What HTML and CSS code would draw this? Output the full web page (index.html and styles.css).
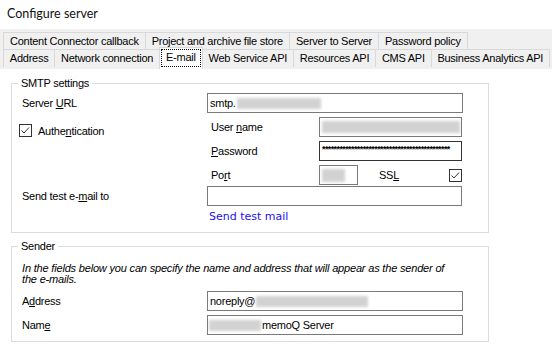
FILE: index.html
```html
<!DOCTYPE html>
<html>
<head>
<meta charset="utf-8">
<link rel="stylesheet" href="styles.css">
</head>
<body>
<div class="title">Configure server</div>
<div class="tabs">
  <div class="tabrow r1">
    <div class="tab">Content Connector callback</div>
    <div class="tab">Project and archive file store</div>
    <div class="tab">Server to Server</div>
    <div class="tab">Password policy</div>
  </div>
  <div class="tabrow r2">
    <div class="tab">Address</div>
    <div class="tab">Network connection</div>
    <div class="tab sel"><span class="focus">E-mail</span></div>
    <div class="tab">Web Service API</div>
    <div class="tab">Resources API</div>
    <div class="tab">CMS API</div>
    <div class="tab">Business Analytics API</div>
  </div>
</div>
<div class="content">
  <fieldset class="group smtp">
    <legend>SMTP settings</legend>
    <div class="row">
      <div class="lbl-a">Server <u>U</u>RL</div>
      <div class="field w256">smtp.<span class="blur b-url"></span></div>
    </div>
    <div class="row gap4">
      <div class="auth">
        <svg class="cb" width="13" height="13" viewBox="0 0 13 13"><rect x="0.5" y="0.5" width="12" height="12" fill="#fff" stroke="#333"/><path d="M2.5 6.5 L5 9 L10 3.5" fill="none" stroke="#333" stroke-width="1"/></svg>
        <span class="auth-txt">Authe<u>n</u>tication</span>
      </div>
      <div class="lbl-b">User <u>n</u>ame</div>
      <div class="field w143"><span class="blur b-user"></span></div>
    </div>
    <div class="row gap4">
      <div class="spacer"></div>
      <div class="lbl-b"><u>P</u>assword</div>
      <div class="field w143 focused"><span class="pwd">********************************************</span></div>
    </div>
    <div class="row gap4">
      <div class="spacer"></div>
      <div class="lbl-b">Po<u>r</u>t</div>
      <div class="field w39"><span class="blur b-port"></span></div>
      <div class="ssl">SS<u>L</u></div>
      <svg class="cb" width="13" height="13" viewBox="0 0 13 13"><rect x="0.5" y="0.5" width="12" height="12" fill="#fff" stroke="#333"/><path d="M2.5 6.5 L5 9 L10 3.5" fill="none" stroke="#333" stroke-width="1"/></svg>
    </div>
    <div class="row gap1">
      <div class="lbl-a">Send test e-<u>m</u>ail to</div>
      <div class="field w255"></div>
    </div>
    <div class="linkrow"><span class="link">Send test mail</span></div>
  </fieldset>
  <fieldset class="group sender">
    <legend>Sender</legend>
    <p class="note">In the fields below you can specify the name and address that will appear as the sender of<br>the e-mails.</p>
    <div class="row gap6">
      <div class="lbl-a">A<u>d</u>dress</div>
      <div class="field w256">noreply@<span class="blur b-addr"></span></div>
    </div>
    <div class="row gap4">
      <div class="lbl-a">Nam<u>e</u></div>
      <div class="field w256 namefield"><span class="blur b-name"></span><span class="nm">memoQ Server</span></div>
    </div>
  </fieldset>
</div>
</body>
</html>
```
FILE: styles.css
```css
* { box-sizing: border-box; }
html, body { margin: 0; padding: 0; }
body {
  width: 552px;
  height: 355px;
  overflow: hidden;
  background: #fff;
  color: #000;
  font-family: "Liberation Sans", Arial, sans-serif;
  font-size: 11px;
  letter-spacing: -0.25px;
}
u { text-decoration: underline; text-underline-offset: 1px; }

.title {
  height: 29px;
  padding: 6px 0 0 7px;
  font-family: Lato, "Liberation Sans", sans-serif;
  font-size: 12.5px;
  line-height: 16px;
  letter-spacing: 0;
  color: #111;
}

.tabs {
  height: 40px;
  background: #f0f0f0;
  padding: 3px 2px 0 3px;
}
.tabrow { display: flex; }
.r1 { height: 17px; }
.r2 { height: 18px; }
.tab {
  border: 1px solid #d9d9d9;
  border-bottom: none;
  padding: 0 6px;
  white-space: nowrap;
  text-align: center;
}
.tab + .tab { margin-left: -1px; }
.r1 .tab { line-height: 16px; }
.r2 .tab { line-height: 17px; flex-grow: 1; padding: 0 3px; }
.r2 .tab.sel {
  flex-grow: 0;
  background: #fff;
  margin-top: -2px;
  height: 22px;
  padding: 1px 1px 0;
  position: relative;
  z-index: 1;
}
.focus {
  display: block;
  border: 1px dotted #000;
  line-height: 15px;
  height: 18px;
  padding: 0 4px;
}

.content { padding: 8px 0 0 11px; }
.group {
  width: 478px;
  margin: 0;
  padding: 0 10px;
  border: 1px solid #dcdcdc;
  min-width: 0;
}
.group legend {
  padding: 0 3px;
  margin-left: -4px;
  line-height: 13px;
}
.smtp { padding-top: 3px; padding-bottom: 9px; }
.sender { margin-top: 7px; padding-bottom: 6px; }

.row { display: flex; align-items: center; height: 20px; }
.gap1 { margin-top: 1px; }
.gap4 { margin-top: 4px; }
.gap6 { margin-top: 6px; }
.lbl-a { width: 185px; }
.lbl-b { width: 108px; }
.spacer { width: 189px; }

.auth {
  width: 192px;
  margin-left: -3px;
  margin-top: 7px;
  align-self: flex-start;
  display: flex;
  align-items: center;
  height: 13px;
}
.auth-txt { margin-left: 6px; }
.cb { display: block; flex: none; }

.field {
  height: 20px;
  border: 1px solid #7a7a7a;
  background: #fff;
  padding: 0 2px;
  line-height: 18px;
  white-space: nowrap;
  overflow: hidden;
  display: flex;
  align-items: center;
}
.field.focused { border-color: #333; }
.w256 { width: 256px; }
.w255 { width: 255px; }
.w143 { width: 143px; }
.w39 { width: 39px; }

.blur {
  display: inline-block;
  height: 11px;
  background: #d2d2d2;
  filter: blur(1.5px);
  flex: none;
}
.b-url { width: 84px; margin-left: 1px; }
.b-user { width: 138px; height: 12px; }
.b-port { width: 23px; height: 13px; }
.b-addr { width: 112px; margin-left: 1px; }
.b-name { width: 52px; margin-left: -1px; }
.nm { margin-left: 1px; }

.pwd {
  font-size: 9px;
  line-height: 9px;
  letter-spacing: -0.6px;
  color: #000;
  font-weight: bold;
  margin-top: -3px;
}

.ssl { margin-left: 21px; width: 70px; }

.linkrow {
  margin-top: 4px;
  height: 13px;
  line-height: 13px;
  padding-left: 187px;
}
.link {
  font-family: "DejaVu Sans", Verdana, sans-serif;
  font-size: 11px;
  letter-spacing: 0;
  color: #1a10f0;
}

.note {
  margin: 10px 0 0 0;
  font-style: italic;
  line-height: 11px;
  letter-spacing: -0.18px;
}
```
